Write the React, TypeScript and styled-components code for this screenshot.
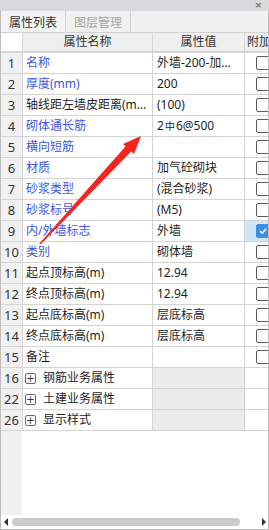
import React from 'react';
import styled, { createGlobalStyle } from 'styled-components';

const GlobalStyle = createGlobalStyle`
  html, body {
    margin: 0;
    padding: 0;
    background: #ffffff;
  }
  body {
    font-family: "Noto Sans", "Noto Sans CJK SC", sans-serif;
    font-size: 12px;
    color: #222;
  }
`;

const Panel = styled.div`
  position: relative;
  width: 269px;
  height: 530px;
  display: flex;
  flex-direction: column;
  overflow: hidden;
`;

const TopBar = styled.div`
  height: 11px;
  background: #d9d9dc;
  display: flex;
  justify-content: flex-end;
  align-items: center;
  padding-right: 7px;
`;

const CloseMark = styled.span`
  font-family: "DejaVu Sans", sans-serif;
  font-size: 9px;
  font-weight: bold;
  line-height: 9px;
  color: #707070;
`;

const Body = styled.div`
  flex: 1;
  display: flex;
  flex-direction: column;
  border: 1px solid #bdbdbd;
  border-top: none;
`;

const TabBar = styled.div`
  height: 21px;
  display: flex;
  background: #f0f0f0;
  border-bottom: 1px solid #d2d2d2;
`;

const Tab = styled.div<{ $active?: boolean }>`
  width: 64px;
  border-right: 1px solid #d2d2d2;
  display: flex;
  align-items: center;
  justify-content: center;
  font-size: 12px;
  color: ${(p) => (p.$active ? '#333' : '#a6a6a6')};
  background: ${(p) => (p.$active ? '#f3f3f3' : '#f0f0f0')};
`;

const Cols = '21px 129px 91px 23px';

const HeaderRow = styled.div`
  display: grid;
  grid-template-columns: ${Cols};
  column-gap: 1px;
  height: 18px;
  background: #d6d6d6;
  border-bottom: 2px solid #d6d6d6;
`;

const HeaderCell = styled.div<{ $blank?: boolean }>`
  background: ${(p) => (p.$blank ? '#ffffff' : '#efefef')};
  display: flex;
  align-items: center;
  justify-content: center;
  white-space: nowrap;
  overflow: hidden;
  color: #333;
  line-height: 18px;
`;

const HeaderEdge = styled(HeaderCell)`
  justify-content: flex-start;
  padding-left: 2px;
`;

const Row = styled.div`
  display: grid;
  grid-template-columns: ${Cols};
  column-gap: 1px;
  height: 20px;
  background: #d4d4d4;
  border-bottom: 1px solid #d4d4d4;
`;

const NumCell = styled.div`
  background: #f0f0f0;
  text-align: center;
  font-size: 13px;
  line-height: 20px;
  color: #333;
`;

const NameCell = styled.div<{ $blue?: boolean }>`
  background: #ffffff;
  padding-left: 3px;
  padding-right: 4px;
  line-height: 20px;
  white-space: nowrap;
  overflow: hidden;
  text-overflow: ellipsis;
  color: ${(p) => (p.$blue ? '#3d55e6' : '#1e1e1e')};
`;

const ValueCell = styled.div<{ $group?: boolean }>`
  background: ${(p) => (p.$group ? '#ebebeb' : '#ffffff')};
  padding-left: 4px;
  padding-right: 2px;
  line-height: 20px;
  white-space: nowrap;
  overflow: hidden;
  text-overflow: ellipsis;
  color: #1e1e1e;
`;

const SmallGlyph = styled.span`
  font-size: 10px;
  margin: 0 1px;
`;

const CheckCell = styled.div<{ $selected?: boolean }>`
  background: ${(p) => (p.$selected ? '#cde6fa' : '#ffffff')};
  display: flex;
  align-items: center;
  padding-left: 11px;
  overflow: hidden;
`;

const Box = styled.div<{ $checked?: boolean }>`
  flex: 0 0 auto;
  width: 12px;
  height: 12px;
  border-radius: 2px;
  border: 1px solid ${(p) => (p.$checked ? '#3a8ee6' : '#5a5a5a')};
  background: ${(p) => (p.$checked ? '#3a8ee6' : '#ffffff')};
  display: flex;
  align-items: center;
  justify-content: center;
`;

const GroupName = styled(NameCell)`
  display: flex;
  align-items: center;
  gap: 7px;
  padding-left: 2px;
`;

const Plus = styled.span`
  width: 9px;
  height: 9px;
  border: 1px solid #6a6a6a;
  border-radius: 2px;
  display: flex;
  align-items: center;
  justify-content: center;
  font-family: "DejaVu Sans", sans-serif;
  font-size: 10px;
  line-height: 9px;
  color: #333;
`;

const Filler = styled.div`
  flex: 1;
  display: grid;
  grid-template-columns: 21px 1fr;
`;

const FillerNum = styled.div`
  background: #f0f0f0;
`;

const ScrollBar = styled.div`
  height: 14px;
  display: flex;
  align-items: center;
  gap: 4px;
  padding: 0 2px 0 3px;
`;

const ArrowTri = styled.span<{ $dir: 'left' | 'right' }>`
  width: 0;
  height: 0;
  border-top: 4px solid transparent;
  border-bottom: 4px solid transparent;
  ${(p) =>
    p.$dir === 'left'
      ? 'border-right: 4px solid #333;'
      : 'border-left: 4px solid #333;'}
`;

const Track = styled.div`
  flex: 1;
  display: flex;
  padding-right: 18px;
`;

const Thumb = styled.div`
  flex: 1;
  height: 8px;
  border-radius: 4px;
  background: #cbcbcb;
`;

const Overlay = styled.svg`
  position: absolute;
  left: 0;
  top: 0;
  pointer-events: none;
`;

type Prop = {
  no: number;
  name: string;
  value?: React.ReactNode;
  blue?: boolean;
  checked?: boolean;
  selected?: boolean;
  group?: boolean;
};

const rows: Prop[] = [
  { no: 1, name: '名称', value: '外墙-200-加气砼砌块', blue: true },
  { no: 2, name: '厚度(mm)', value: '200', blue: true },
  { no: 3, name: '轴线距左墙皮距离(mm)', value: '(100)' },
  {
    no: 4,
    name: '砌体通长筋',
    value: (
      <>
        2<SmallGlyph>中</SmallGlyph>6@500
      </>
    ),
    blue: true,
  },
  { no: 5, name: '横向短筋', value: '', blue: true },
  { no: 6, name: '材质', value: '加气砼砌块', blue: true },
  { no: 7, name: '砂浆类型', value: '(混合砂浆)', blue: true },
  { no: 8, name: '砂浆标号', value: '(M5)', blue: true },
  { no: 9, name: '内/外墙标志', value: '外墙', blue: true, checked: true, selected: true },
  { no: 10, name: '类别', value: '砌体墙', blue: true },
  { no: 11, name: '起点顶标高(m)', value: '12.94' },
  { no: 12, name: '终点顶标高(m)', value: '12.94' },
  { no: 13, name: '起点底标高(m)', value: '层底标高' },
  { no: 14, name: '终点底标高(m)', value: '层底标高' },
  { no: 15, name: '备注', value: '' },
  { no: 16, name: '钢筋业务属性', group: true },
  { no: 22, name: '土建业务属性', group: true },
  { no: 26, name: '显示样式', group: true },
];

function Check({ checked }: { checked?: boolean }) {
  return (
    <Box $checked={checked}>
      {checked && (
        <svg width="10" height="10" viewBox="0 0 10 10">
          <path d="M2 5.2 L4.2 7.2 L8.2 2.8" fill="none" stroke="#fff" strokeWidth="1.6" />
        </svg>
      )}
    </Box>
  );
}

export default function App() {
  return (
    <>
      <GlobalStyle />
      <Panel>
        <TopBar>
          <CloseMark>×</CloseMark>
        </TopBar>
        <Body>
          <TabBar>
            <Tab $active>属性列表</Tab>
            <Tab>图层管理</Tab>
          </TabBar>
          <HeaderRow>
            <HeaderCell $blank />
            <HeaderCell>属性名称</HeaderCell>
            <HeaderCell>属性值</HeaderCell>
            <HeaderEdge>附加</HeaderEdge>
          </HeaderRow>
          {rows.map((r) => (
            <Row key={r.no}>
              <NumCell>{r.no}</NumCell>
              {r.group ? (
                <GroupName>
                  <Plus>+</Plus>
                  {r.name}
                </GroupName>
              ) : (
                <NameCell $blue={r.blue}>{r.name}</NameCell>
              )}
              <ValueCell $group={r.group}>{r.value}</ValueCell>
              {r.group ? (
                <CheckCell />
              ) : (
                <CheckCell $selected={r.selected}>
                  <Check checked={r.checked} />
                </CheckCell>
              )}
            </Row>
          ))}
          <Filler>
            <FillerNum />
            <div />
          </Filler>
          <ScrollBar>
            <ArrowTri $dir="left" />
            <Track>
              <Thumb />
            </Track>
            <ArrowTri $dir="right" />
          </ScrollBar>
        </Body>
        <Overlay width="269" height="530" viewBox="0 0 269 530">
          <polygon
            points="39.4,243.6 40.6,244.4 131.4,151.3 125.9,146.1"
            fill="#f2261c"
          />
          <polygon points="141,136 134,154 123,144" fill="#f2261c" />
        </Overlay>
      </Panel>
    </>
  );
}
